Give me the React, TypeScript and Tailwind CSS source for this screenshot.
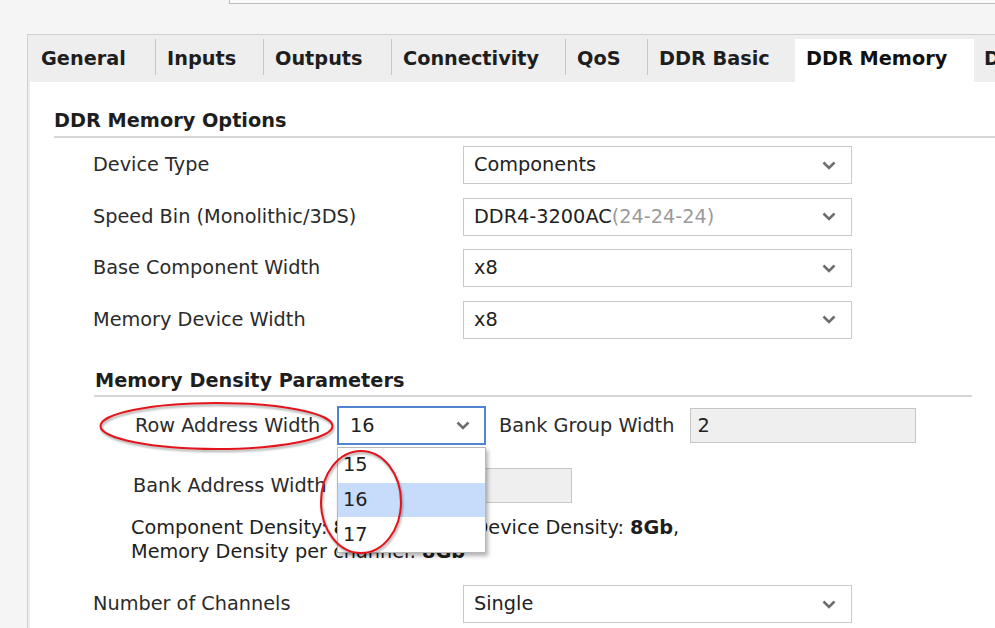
const tabs = [
  { name: "General", w: "w-[125px]" },
  { name: "Inputs", w: "w-[107px]" },
  { name: "Outputs", w: "w-[127px]" },
  { name: "Connectivity", w: "w-[173px]" },
  { name: "QoS", w: "w-[81px]" },
  { name: "DDR Basic", w: "w-[147px]" },
];

const memoryRows = [
  { label: "Device Type", value: "Components" },
  { label: "Speed Bin (Monolithic/3DS)", value: "DDR4-3200AC", dim: "(24-24-24)" },
  { label: "Base Component Width", value: "x8" },
  { label: "Memory Device Width", value: "x8" },
];

const Chevron = () => (
  <svg width="14" height="9" viewBox="0 0 14 9" className="shrink-0">
    <path d="M1.5 1.5 L7 7 L12.5 1.5" fill="none" stroke="#6e6e6e" strokeWidth="2.6" />
  </svg>
);

const Select = ({ value, dim }: { value: string; dim?: string }) => (
  <div className="flex items-center justify-between w-[389px] h-[38px] border-[1.5px] border-[#c9c9c9] bg-white pl-[10px] pr-[15px]">
    <span>
      {value}
      {dim && <span className="text-[#9a9a9a]">{dim}</span>}
    </span>
    <Chevron />
  </div>
);

const FormRow = ({ label, value, dim }: { label: string; value: string; dim?: string }) => (
  <div className="flex items-center">
    <span className="w-[370px] text-[#2b2b2b]">{label}</span>
    <Select value={value} dim={dim} />
  </div>
);

export default function App() {
  return (
    <div className="relative w-[995px] h-[628px] overflow-hidden bg-[#f5f5f5] font-['DejaVu_Sans',sans-serif] text-[19.3px] leading-[24px] text-[#222]">
      {/* top text field, mostly cut off */}
      <div className="h-[34px]">
        <div className="ml-[229px] h-[4px] border-l border-b border-[#bdbdbd] bg-[#f9f9f9]" />
      </div>

      <div className="ml-[27px] h-[594px] flex flex-col border-l border-t border-[#cfcfcf] bg-[#eeeeee] pl-[2px]">
        {/* tab strip */}
        <div className="flex h-[47px] pt-[4px] shrink-0 overflow-hidden">
          {tabs.map((t) => (
            <div key={t.name} className="flex shrink-0">
              <div className={`${t.w} shrink-0 flex items-center pl-[11px] pb-[3px] font-bold text-[#1e1e1e] whitespace-nowrap`}>{t.name}</div>
              {t.name !== "DDR Basic" && <div className="w-px h-[36px] shrink-0 bg-[#c6c6c6]" />}
            </div>
          ))}
          <div className="w-[179px] shrink-0 flex items-center pl-[11px] pb-[3px] font-bold text-[#111] bg-white whitespace-nowrap">DDR Memory</div>
          <div className="w-[80px] shrink-0 flex items-center pl-[10px] pb-[3px] font-bold text-[#1e1e1e] whitespace-nowrap">DDR</div>
        </div>

        {/* tab content */}
        <div className="flex-1 bg-white flex flex-col">
          <div className="ml-[24px] mt-[27px] font-bold text-[#1e1e1e]">DDR Memory Options</div>
          <div className="ml-[24px] mt-[3px] h-[2px] bg-[#d6d6d6]" />

          <div className="ml-[63px] mt-[8px] flex flex-col gap-[13.5px]">
            {memoryRows.map((r) => (
              <FormRow key={r.label} label={r.label} value={r.value} dim={r.dim} />
            ))}
          </div>

          <div className="ml-[65px] mt-[30.5px] flex flex-col">
            <div className="font-bold text-[#1e1e1e]">Memory Density Parameters</div>
            <div className="mt-[2px] -ml-px w-[878px] h-[2px] bg-[#d6d6d6]" />

            <div className="mt-[9px] flex items-center">
              <span className="w-[242px] pl-[40px] text-[#2b2b2b]">Row Address Width</span>
              <div className="relative flex items-center justify-between w-[149px] h-[39px] border-2 border-[#5083d0] bg-white pl-[11px] pr-[14px]">
                <span>16</span>
                <Chevron />
                <div className="absolute -left-[2px] top-[39px] z-10 w-[149px] h-[106px] border border-[#b8b8b8] bg-white shadow-[2px_3px_4px_rgba(0,0,0,0.3)] flex flex-col">
                  <div className="h-[35px] flex items-center pl-[5px]">15</div>
                  <div className="h-[35px] flex items-center pl-[5px] bg-[#c6dcfa]">16</div>
                  <div className="h-[35px] flex items-center pl-[5px]">17</div>
                </div>
              </div>
              <span className="ml-[13px] text-[#2b2b2b]">Bank Group Width</span>
              <div className="ml-[16px] w-[226px] h-[35px] flex items-center bg-[#efefef] border-[1.5px] border-[#c6c6c6] pl-[6px]">2</div>
            </div>

            <div className="mt-[23px] flex items-center">
              <span className="w-[242px] pl-[38px] text-[#2b2b2b]">Bank Address Width</span>
              <div className="w-[235px] h-[35px] bg-[#efefef] border-[1.5px] border-[#c6c6c6]" />
            </div>

            <div className="mt-[13px] pl-[36px] text-[#1e1e1e]">
              <div>
                Component Density: <b>8Gb</b>, Memory Device Density: <b>8Gb</b>,
              </div>
              <div>
                Memory Density per channel: <b>8Gb</b>
              </div>
            </div>
          </div>

          <div className="ml-[63px] mt-[21px]">
            <FormRow label="Number of Channels" value="Single" />
          </div>
        </div>
      </div>

      {/* red annotation marks */}
      <svg
        width="995"
        height="628"
        className="absolute inset-0 z-20 pointer-events-none drop-shadow-[1px_2px_1px_rgba(0,0,0,0.35)]"
      >
        <ellipse cx="216.5" cy="426" rx="116" ry="23" fill="none" stroke="#e3141b" strokeWidth="2" />
        <ellipse cx="361" cy="502" rx="40" ry="51" fill="none" stroke="#e3141b" strokeWidth="2" />
      </svg>
    </div>
  );
}
